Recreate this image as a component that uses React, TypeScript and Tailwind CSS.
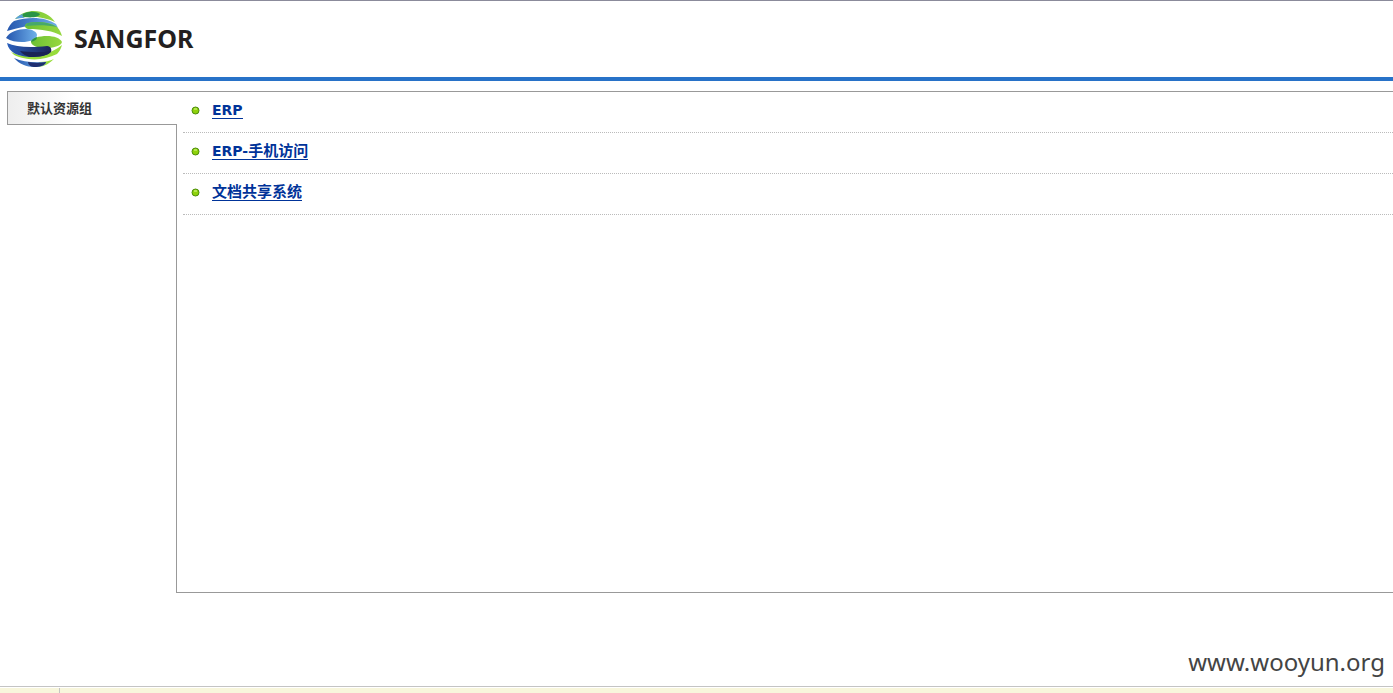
const resources = [
  { id: "erp", latin: "ERP", cjk: "" },
  { id: "erp-mobile", latin: "ERP-", cjk: "手机访问" },
  { id: "docs", latin: "", cjk: "文档共享系统" },
];

function Logo() {
  return (
    <svg viewBox="0 0 56 56" className="h-14 w-14" aria-hidden="true">
      <defs>
        <linearGradient id="blue" x1="0" y1="0" x2="1" y2="0">
          <stop offset="0" stopColor="#2556ae" />
          <stop offset="1" stopColor="#6fb0ea" />
        </linearGradient>
        <linearGradient id="navy" x1="0" y1="0" x2="1" y2="0">
          <stop offset="0" stopColor="#2a60bd" />
          <stop offset="1" stopColor="#1c2357" />
        </linearGradient>
        <linearGradient id="green" x1="0" y1="0" x2="1" y2="0">
          <stop offset="0" stopColor="#6cbf34" />
          <stop offset="1" stopColor="#97d840" />
        </linearGradient>
      </defs>
      {/* top cap */}
      <path d="M9 8C15 2 22 0 28 0c9 0 16 4 21 11C38 6 24 4 9 8z" fill="url(#green)" />
      <path d="M9 8c3-3 5-4 8-5-1 2 0 3 2 4-3 0-7 0-10 1z" fill="#5aa0dd" />
      <path d="M17 3c5-3 13-3 17 0-1 3-8 4-15 3-2 0-3-2-2-3z" fill="#2a9446" />
      {/* upper band */}
      <path d="M1 20C3 15 5 12 8 10c15-5 32-4 42 3l2 4c-12-5-33-3-51 3z" fill="url(#blue)" />
      <path d="M22 12c10-2 22-1 29 4 3 3 4 6 5 9-9-5-20-7-34-7-4-1-4-5 0-6z" fill="url(#green)" />
      <path d="M22 12c9-2 21-1 29 4-10-2-20-2-31-1 0-1 1-2 2-3z" fill="#46a86c" />
      {/* middle band */}
      <path d="M0 27c3-6 12-9 20-9 6 0 11 3 11 6 0 5-8 7-15 7-6 0-11-1-16-4z" fill="url(#blue)" />
      <path d="M56 31c-1 4-9 6-17 6-8 0-14-3-14-6 1-4 8-6 16-6 7 0 13 2 15 6z" fill="url(#green)" />
      <path d="M31 26c0 3-3 4-6 5 0-2 3-4 6-5z" fill="#2a9446" />
      {/* lower bands */}
      <path d="M5 41c13 7 35 6 51-7-1 4-3 7-5 9-12 6-25 7-38 3-4-1-6-3-8-5z" fill="#98dc3c" />
      <path d="M1 32c9 4 22 5 40 3 4 0 5 4 4 6-3 4-13 5-22 5C12 45 3 42 1 32z" fill="url(#navy)" />
      <path d="M14 40c8 1 20 2 31 0-3 5-12 6-21 6-4-1-8-3-10-6z" fill="#1a2356" />
      <path d="M33 51c6 0 11-1 15-3-4 4-9 7-15 8z" fill="#98dc3c" />
      <path d="M8 47c9 4 19 5 32 4 0 3-5 5-12 5-7 0-15-3-20-9z" fill="url(#blue)" />
      <path d="M22 51c6 1 12 1 18 0 0 3-6 5-12 5-4 0-6-3-6-5z" fill="#1f2f70" />
    </svg>
  );
}

function Bullet() {
  return (
    <svg viewBox="0 0 9 9" className="h-[9px] w-[9px]" aria-hidden="true">
      <circle cx="4.5" cy="4.5" r="3.5" fill="#8ed20a" stroke="#4c8c0c" />
      <rect x="3" y="2" width="3" height="2" fill="#b4e64e" />
    </svg>
  );
}

export default function App() {
  return (
    <div className="flex min-h-screen flex-col border-t border-[#8b8b9b] bg-white font-['DejaVu_Sans','Noto_Sans_CJK_SC',sans-serif]">
      <header className="flex h-20 items-center gap-3 border-b-4 border-[#2872c8] pl-1.5">
        <Logo />
        <h1 className="pb-0.5 font-['Noto_Sans',sans-serif] text-[25px] leading-7 font-bold text-[#231f20]">
          SANGFOR
        </h1>
      </header>

      <main className="flex flex-1 pt-2.5 pl-[7px]">
        {/* Resource groups */}
        <nav className="flex w-[170px] flex-col">
          <button
            type="button"
            className="h-[34px] border-y border-l border-[#999] bg-linear-to-r from-[#eee] to-white to-40% pt-0.5 pl-[19px] text-left text-[13px] font-bold text-[#333]"
          >
            默认资源组
          </button>
          <div className="flex-1 border-r border-[#999]" />
        </nav>

        {/* Resources of the selected group */}
        <section className="flex-1 border-y border-[#999] pl-1.5">
          <ul>
            {resources.map((item) => (
              <li
                key={item.id}
                className="flex h-[41px] items-center gap-3 border-b border-dotted border-[#bbb] pb-1 pl-2"
              >
                <Bullet />
                <a
                  href={`#${item.id}`}
                  className="border-b border-[#039] text-[15px] leading-4 font-bold text-[#039]"
                >
                  {item.latin && <span className="text-sm leading-4">{item.latin}</span>}
                  {item.cjk}
                </a>
              </li>
            ))}
          </ul>
        </section>
      </main>

      <p className="flex h-[93px] items-end justify-end pr-2 pb-2 font-['Noto_Sans',sans-serif] text-2xl text-[#444]">
        www.wooyun.org
      </p>

      <footer className="flex h-[7px] border-t border-[#c4c4c4] pt-px">
        <div className="w-[60px] border-r border-[#c4c4c4] bg-[#f8f6dc]" />
        <div className="flex-1 bg-[#f8f6dc]" />
      </footer>
    </div>
  );
}
